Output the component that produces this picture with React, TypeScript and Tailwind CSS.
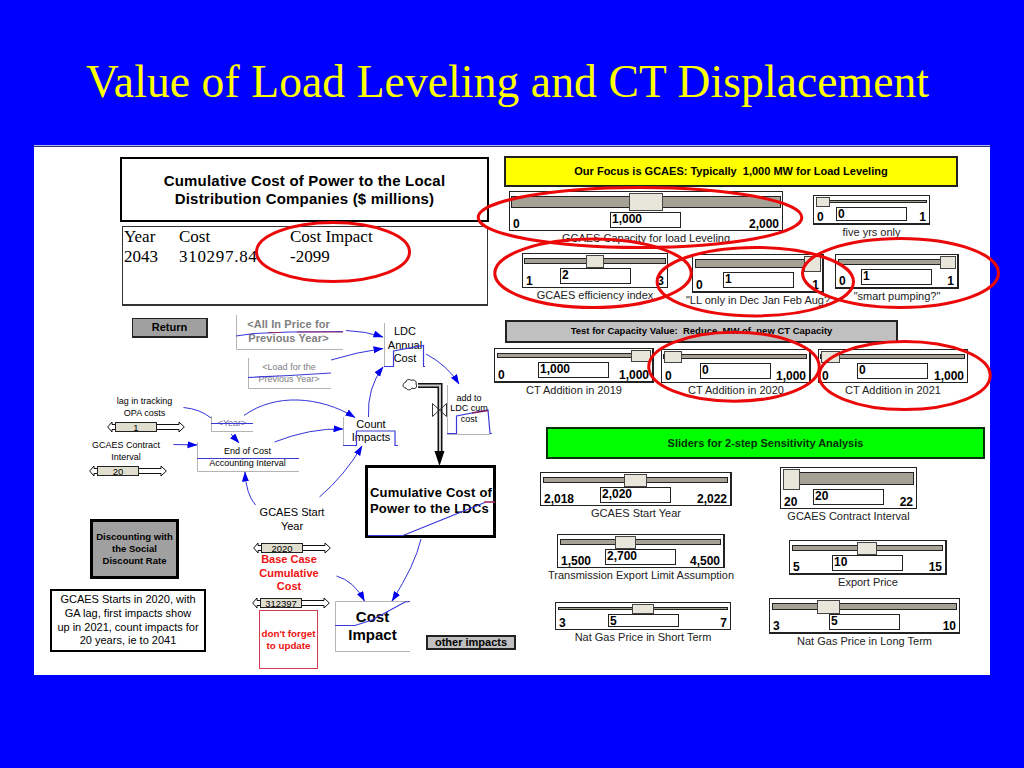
import type { ReactNode } from "react"
import clsx from "clsx"

type SliderProps = {
  label: string
  min: string
  max: string
  value: string
  place?: string
  box: string
  track: string
  thumb: string
  gutter: string
  field: string
}

const focusSliders: SliderProps[] = [
  {
    label: "GCAES Capacity for load Leveling",
    min: "0",
    max: "2,000",
    value: "1,000",
    box: "w-[274px] h-[40px]",
    track: "mx-[1px] h-[12px]",
    thumb: "left-[117px] w-[34px] h-[18px]",
    gutter: "w-[100px]",
    field: "h-[16px]",
  },
  {
    label: "five yrs only",
    min: "0",
    max: "1",
    value: "0",
    place: "mt-1",
    box: "w-[117px] h-[30px] border-b-2",
    track: "mx-[2px] h-[3px]",
    thumb: "left-[-1px] w-[14px] h-[10px]",
    gutter: "w-[22px]",
    field: "h-[14px]",
  },
]

const levelingSliders: SliderProps[] = [
  {
    label: "GCAES efficiency index",
    min: "1",
    max: "3",
    value: "2",
    box: "w-[146px] h-[35px]",
    track: "mx-[1px] h-[6px]",
    thumb: "left-[61px] w-[18px] h-[13px]",
    gutter: "w-[37px]",
    field: "h-[16px]",
  },
  {
    label: '"LL only in Dec Jan Feb Aug?',
    min: "0",
    max: "1",
    value: "1",
    place: "ml-6 mt-px",
    box: "w-[132px] h-[39px] border-r-2 border-b-2",
    track: "mx-[2px] h-[9px]",
    thumb: "left-[108px] w-[17px] h-[16px]",
    gutter: "w-[30px]",
    field: "h-[16px]",
  },
  {
    label: '"smart pumping?"',
    min: "0",
    max: "1",
    value: "1",
    place: "ml-[11px] mt-px",
    box: "w-[124px] h-[35px] border-r-2 border-b-2",
    track: "mx-[2px] h-[6px]",
    thumb: "left-[101px] w-[16px] h-[13px]",
    gutter: "w-[25px]",
    field: "h-[16px]",
  },
]

const capacitySliders: SliderProps[] = [
  {
    label: "CT Addition in 2019",
    min: "0",
    max: "1,000",
    value: "1,000",
    box: "w-[160px] h-[35px] border-r-2 border-b-2",
    track: "mx-[2px] h-[5px]",
    thumb: "left-[133px] w-[20px] h-[12px]",
    gutter: "w-[43px]",
    field: "h-[16px]",
  },
  {
    label: "CT Addition in 2020",
    min: "0",
    max: "1,000",
    value: "0",
    place: "mt-px",
    box: "w-[150px] h-[34px] border-r-2",
    track: "ml-[1px] mr-[2px] h-[5px]",
    thumb: "left-0 w-[18px] h-[12px]",
    gutter: "w-[38px]",
    field: "h-[16px]",
  },
  {
    label: "CT Addition in 2021",
    min: "0",
    max: "1,000",
    value: "0",
    place: "mt-px",
    box: "w-[150px] h-[34px]",
    track: "ml-[1px] mr-[2px] h-[5px]",
    thumb: "left-0 w-[19px] h-[12px]",
    gutter: "w-[38px]",
    field: "h-[16px]",
  },
]

const nearTermSliders: SliderProps[] = [
  {
    label: "GCAES Start Year",
    min: "2,018",
    max: "2,022",
    value: "2,020",
    box: "w-[192px] h-[34px] border-r-2",
    track: "mx-[2px] h-[6px]",
    thumb: "left-[80px] w-[23px] h-[13px]",
    gutter: "w-[59px]",
    field: "h-[16px]",
  },
  {
    label: "Transmission Export Limit Assumption",
    min: "1,500",
    max: "4,500",
    value: "2,700",
    place: "ml-[17px] mt-[14px]",
    box: "w-[168px] h-[34px] border-r-2",
    track: "mx-[2px] h-[6px]",
    thumb: "left-[54px] w-[21px] h-[13px]",
    gutter: "w-[47px]",
    field: "h-[16px]",
  },
  {
    label: "Nat Gas Price in Short Term",
    min: "3",
    max: "7",
    value: "5",
    place: "ml-[15px] mt-5",
    box: "w-[176px] h-[28px]",
    track: "mx-[2px] h-[3px]",
    thumb: "left-[73px] w-[22px] h-[10px]",
    gutter: "w-[52px]",
    field: "h-[13px]",
  },
]

const longTermSliders: SliderProps[] = [
  {
    label: "GCAES Contract Interval",
    min: "20",
    max: "22",
    value: "20",
    place: "ml-[11px]",
    box: "w-[137px] h-[42px]",
    track: "mx-[2px] h-[13px]",
    thumb: "left-[-1px] w-[17px] h-[21px]",
    gutter: "w-[32px]",
    field: "h-[16px]",
  },
  {
    label: "Export Price",
    min: "5",
    max: "15",
    value: "10",
    place: "ml-5 mt-[17px]",
    box: "w-[158px] h-[35px] border-r-2 border-b-2",
    track: "mx-[2px] h-[6px]",
    thumb: "left-[64px] w-[20px] h-[13px]",
    gutter: "w-[42px]",
    field: "h-[16px]",
  },
  {
    label: "Nat Gas Price in Long Term",
    min: "3",
    max: "10",
    value: "5",
    place: "mt-[9px]",
    box: "w-[191px] h-[36px] border-b-2",
    track: "mx-[2px] h-[7px]",
    thumb: "left-[44px] w-[23px] h-[14px]",
    gutter: "w-[59px]",
    field: "h-[16px]",
  },
]

const highlights = [
  { cx: 333, cy: 252, rx: 76.5, ry: 29.5 },
  { cx: 640, cy: 217.5, rx: 161.8, ry: 30 },
  { cx: 593, cy: 273.3, rx: 98.2, ry: 34.2 },
  { cx: 755.3, cy: 281.7, rx: 98.2, ry: 34.2 },
  { cx: 900.5, cy: 273, rx: 98, ry: 34.5 },
  { cx: 734, cy: 366.7, rx: 85.3, ry: 34.5 },
  { cx: 904.7, cy: 375.5, rx: 85.5, ry: 34 },
]

const causalArrows = [
  "M346 330.5 Q365 331 383 337",
  "M331 360 Q357 352 383 348.5",
  "M368.5 417 Q367 388 383 367",
  "M426 354 Q447 365 459 384",
  "M244 415.5 C275 393 320 396 355 417.5",
  "M274.5 442 Q310 428 343 429",
  "M319.5 497 Q345 475 362 446",
  "M231 434 L239 443",
  "M173.5 444.5 L197 445",
  "M255.5 505 Q246 494 245 472",
  "M336.5 576 Q354 581 364.5 601",
  "M421 539 Q415 565 392 601",
]

const framePaths = [
  "M236.5 315 V349.5 H343",
  "M248.5 358 V388.5 H331",
  "M384.5 323 V366",
  "M447.5 385 V434.5 H490",
  "M343.5 417 V445",
  "M211.5 416 V431.5 H253",
  "M197.5 442 V471.5 H299",
  "M410 601.5 H335.5 V651.5 H410",
]

const plotPaths = [
  "M236 336 L254 333.5 L290 332 L343 331.5",
  "M248 377.5 L290 375.5 L331 373",
  "M384 366.5 H393.5 V351 L423.5 345.5 V366.5 H425",
  "M447 433.5 H456.5 V416 L488 410 L490 433.5 H492",
  "M343 445.5 H356.5 V431 H395 V445.5 H398",
  "M211 423.5 H253",
  "M197 458.5 H299",
  "M368 535.5 H403 L486 502 H495",
  "M335 625.5 H355 L372 620 L405 602 L410 601.5",
]

function Slider({ label, min, max, value, place, box, track, thumb, gutter, field }: SliderProps) {
  return (
    <div className={clsx("flex shrink-0 flex-col items-center", place)}>
      <div className={clsx("flex shrink-0 flex-col border border-[#222] bg-white", box)}>
        <div className={clsx("relative mt-1 shrink-0 border border-[#222] bg-[#a5a195]", track)}>
          <div className={clsx("absolute -top-1 border border-[#444] bg-[#e8e6da]", thumb)} />
        </div>
        <div className="flex min-h-0 flex-1 text-[12px] leading-none font-bold">
          <span className={clsx("shrink-0 self-end pl-[3px]", gutter)}>{min}</span>
          <div className={clsx("mt-1 w-[71px] shrink-0 border border-[#222] bg-white pl-px", field)}>{value}</div>
          <span className="ml-auto self-end pr-[3px]">{max}</span>
        </div>
      </div>
      {/* zero width, so a long caption never widens the slider's column */}
      <div className="mt-px flex w-0 justify-center text-[11px] leading-[13px] whitespace-nowrap text-[#222]">
        <span>{label}</span>
      </div>
    </div>
  )
}

function Node({ className, children }: { className: string; children: ReactNode }) {
  return <div className={clsx("absolute -translate-x-1/2 text-center whitespace-pre", className)}>{children}</div>
}

function ConstantSlider({ className, value }: { className: string; value: string }) {
  return (
    <div className={clsx("absolute flex h-[12px] w-[78px] items-center", className)}>
      <svg width="8" height="12" viewBox="0 0 8 12" fill="#fff" stroke="#111">
        <path d="M9 3.5 H5 V1 L0.7 6 L5 11 V8.5 H9" />
      </svg>
      <div className="h-[10px] w-[42px] shrink-0 border border-[#222] bg-[#e0decf] text-center text-[9.5px] leading-[10px]">
        {value}
      </div>
      <svg width="28" height="12" viewBox="50 0 28 12" fill="#fff" stroke="#111">
        <path d="M49 3.5 H72 V1 L77.3 6 L72 11 V8.5 H49" />
      </svg>
    </div>
  )
}

function Diagram() {
  return (
    <div className="relative h-[365px] w-[466px]">
      <div className="absolute top-[8px] left-[98px] flex h-[20px] w-[76px] items-center justify-center border border-r-2 border-b-2 border-[#222] bg-[#a0a0a0] text-[11px] font-bold">
        Return
      </div>
      <div className="absolute top-[209px] left-[56px] flex h-[60px] w-[89px] items-center justify-center border-[3px] border-black bg-[#a0a0a0] text-center text-[9.5px] leading-[11.7px] font-bold whitespace-pre">
        {"Discounting with\nthe Social\nDiscount Rate"}
      </div>
      <div className="absolute top-[279px] left-[16px] flex h-[63px] w-[156px] items-center justify-center border-2 border-black text-center text-[11px] leading-[13.6px] whitespace-pre">
        {"GCAES Starts in 2020, with\nGA lag, first impacts show\nup in 2021, count impacts for\n20 years, ie to 2041"}
      </div>
      <div className="absolute top-[300px] left-[225px] flex h-[59px] w-[59px] items-center justify-center border border-[#d23c50] text-center text-[9.8px] leading-[11.8px] font-bold whitespace-pre text-[#ee1111]">
        {"don't forget\nto update"}
      </div>
      <div className="absolute top-[155px] left-[331px] h-[73px] w-[131px] border-[3px] border-black pt-[17px] pl-[2px] text-[13px] leading-[16px] font-bold tracking-[0.2px] whitespace-pre">
        {"Cumulative Cost of\nPower to the LDCs"}
      </div>
      <div className="absolute top-[325px] left-[392px] flex h-[15px] w-[90px] items-center justify-center border-2 border-[#222] bg-[#c0c0c0] text-[11px] leading-none font-bold">
        other impacts
      </div>

      <Node className="top-[8px] left-[254.5px] text-[11px] leading-[13.5px] font-bold tracking-[0.1px] text-[#808080]">
        {"<All In Price for\nPrevious Year>"}
      </Node>
      <Node className="top-[51px] left-[255px] text-[9px] leading-[12px] text-[#808080]">
        {"<Load for the\nPrevious Year>"}
      </Node>
      <Node className="top-[15px] left-[371px] text-[11px] leading-[13.5px]">{"LDC\nAnnual\nCost"}</Node>
      <Node className="top-[82.5px] left-[435px] text-[9px] leading-[10.8px]">{"add to\nLDC cum\ncost"}</Node>
      <Node className="top-[107.5px] left-[337px] text-[11px] leading-[13.5px]">{"Count\nImpacts"}</Node>
      <Node className="top-[85px] left-[110.5px] text-[9px] leading-[12px]">{"lag in tracking\nOPA costs"}</Node>
      <Node className="top-[129px] left-[92px] text-[9px] leading-[12px]">{"GCAES Contract\nInterval"}</Node>
      <Node className="top-[107px] left-[198px] text-[9px] leading-[12px] text-[#7070a0]">{"<Year>"}</Node>
      <Node className="top-[135px] left-[213.5px] text-[9px] leading-[12px]">{"End of Cost\nAccounting Interval"}</Node>
      <Node className="top-[196px] left-[258px] text-[11px] leading-[13.5px]">{"GCAES Start\nYear"}</Node>
      <Node className="top-[243px] left-[255px] text-[11px] leading-[13.5px] font-bold text-[#ee1111]">
        {"Base Case\nCumulative\nCost"}
      </Node>
      <Node className="top-[298px] left-[338.5px] text-[15px] leading-[17.7px] font-bold">{"Cost\nImpact"}</Node>

      <ConstantSlider className="top-[111px] left-[73px]" value="1" />
      <ConstantSlider className="top-[155px] left-[55px]" value="20" />
      <ConstantSlider className="top-[232px] left-[219px]" value="2020" />
      <ConstantSlider className="top-[287px] left-[218px]" value="312397" />

      <svg className="absolute inset-0" width="466" height="365" viewBox="34 310 466 365" fill="none">
        <defs>
          <marker id="head" markerUnits="userSpaceOnUse" markerWidth="12" markerHeight="8" refX="9.5" refY="3.5" orient="auto">
            <path d="M0 0 L10 3.5 L0 7 Z" fill="#0000ee" />
          </marker>
        </defs>
        {framePaths.map((d) => (
          <path key={d} d={d} stroke="#b4b4b4" />
        ))}
        {plotPaths.map((d) => (
          <path key={d} d={d} stroke="#3a3ad8" strokeWidth="1.2" />
        ))}
        <path d="M268 332.5 H281 M297 332 H343" stroke="#90306c" strokeWidth="1.2" />
        <path d="M472 413 L488 410.5" stroke="#802060" strokeWidth="1.5" />
        <path d="M484 502 H495" stroke="#c02040" strokeWidth="1.2" />
        {causalArrows.map((d) => (
          <path key={d} d={d} stroke="#3333d8" markerEnd="url(#head)" />
        ))}
        <path d="M183.5 407.5 Q200 409 211 418" stroke="#3333d8" />

        {/* inflow pipe with its valve and source cloud */}
        <path d="M418 385.5 H440 V453" stroke="#111" strokeWidth="5" />
        <path d="M418 385.5 H440 V453" stroke="#ccc" strokeWidth="2" />
        <path d="M434.5 451 H444.5 L439.5 466 Z" fill="#000" />
        <path d="M432.5 403.5 V416.5 L446.5 403.5 V416.5 Z" stroke="#333" />
        <path
          d="M406 388 C402 388 402 383 406 382 C406 379 410 379 411 380.5 C414 379 417 381 416 384 C418 387 415 390 412 388 C410 391 407 390 406 388 Z"
          fill="#fff"
          stroke="#222"
        />
      </svg>
    </div>
  )
}

export default function App() {
  return (
    <div className="relative h-[768px] w-[1024px] overflow-hidden bg-[#0000ff] font-['Liberation_Sans',Arial,sans-serif] text-black">
      <h1 className="h-[145px] pt-[55px] pr-[9px] text-center font-['Liberation_Serif','Times_New_Roman',serif] text-[45.5px] leading-[54px] tracking-[0.12px] whitespace-nowrap text-[#ffff00]">
        Value of Load Leveling and CT Displacement
      </h1>

      <main className="ml-[34px] flex h-[530px] w-[956px] border-t border-[#b8b8e8] bg-white">
        <section className="flex w-[460px] shrink-0 flex-col gap-1 border-t border-[#303080] pt-[10px]">
          <div className="ml-[86px] flex h-[65px] w-[369px] shrink-0 items-center justify-center border-[2.5px] border-black text-center text-[15px] leading-[18px] font-bold tracking-[0.2px] whitespace-pre">
            {"Cumulative Cost of Power to the Local\nDistribution Companies ($ millions)"}
          </div>
          <div className="ml-[88px] grid h-[80px] w-[366px] shrink-0 grid-cols-[55px_111px_1fr] content-start border border-b-2 border-[#333] pl-px font-['Liberation_Serif','Times_New_Roman',serif] text-[17px] leading-[19.5px]">
            <span>Year</span>
            <span>Cost</span>
            <span>Cost Impact</span>
            <span>2043</span>
            <span className="tracking-[0.7px]">310297.84</span>
            <span>-2099</span>
          </div>
          <Diagram />
        </section>

        <section className="w-[496px] shrink-0 border-t border-[#303080] pt-[9px]">
          <div className="ml-[10px] flex h-[31px] w-[454px] items-center justify-center border-2 border-[#222] bg-[#ffff00] text-[11px] font-bold whitespace-pre">
            {"Our Focus is GCAES: Typically  1,000 MW for Load Leveling"}
          </div>
          <div className="flex h-[66px] items-start gap-[30px] pt-1 pl-[15px]">
            {focusSliders.map((slider) => (
              <Slider key={slider.label} {...slider} />
            ))}
          </div>
          <div className="flex h-[67px] items-start pl-7">
            {levelingSliders.map((slider) => (
              <Slider key={slider.label} {...slider} />
            ))}
          </div>
          <div className="ml-[11px] flex h-[23px] w-[393px] items-center justify-center border-2 border-[#222] bg-[#c0c0c0] text-[9.5px] font-bold whitespace-pre">
            {"Test for Capacity Value:  Reduce  MW of  new CT Capacity"}
          </div>
          <div className="flex h-[84px] items-start gap-[7px] pt-[5px]">
            {capacitySliders.map((slider) => (
              <Slider key={slider.label} {...slider} />
            ))}
          </div>
          <div className="ml-[52px] flex h-[32px] w-[439px] items-center justify-center border-2 border-[#063006] bg-[#00ff00] text-[11px] font-bold text-[#023002]">
            Sliders for 2-step Sensitivity Analysis
          </div>
          <div className="flex gap-[37px] pl-[46px]">
            <div className="flex flex-col items-start pt-[13px]">
              {nearTermSliders.map((slider) => (
                <Slider key={slider.label} {...slider} />
              ))}
            </div>
            <div className="flex flex-col items-start pt-2">
              {longTermSliders.map((slider) => (
                <Slider key={slider.label} {...slider} />
              ))}
            </div>
          </div>
        </section>
      </main>

      {/* hand-drawn style ellipses over the panel */}
      <svg className="pointer-events-none absolute inset-0" width="1024" height="768" viewBox="0 0 1024 768" fill="none">
        {highlights.map((h) => (
          <ellipse key={h.cx} {...h} stroke="#ea0808" strokeWidth="3" />
        ))}
      </svg>
    </div>
  )
}
